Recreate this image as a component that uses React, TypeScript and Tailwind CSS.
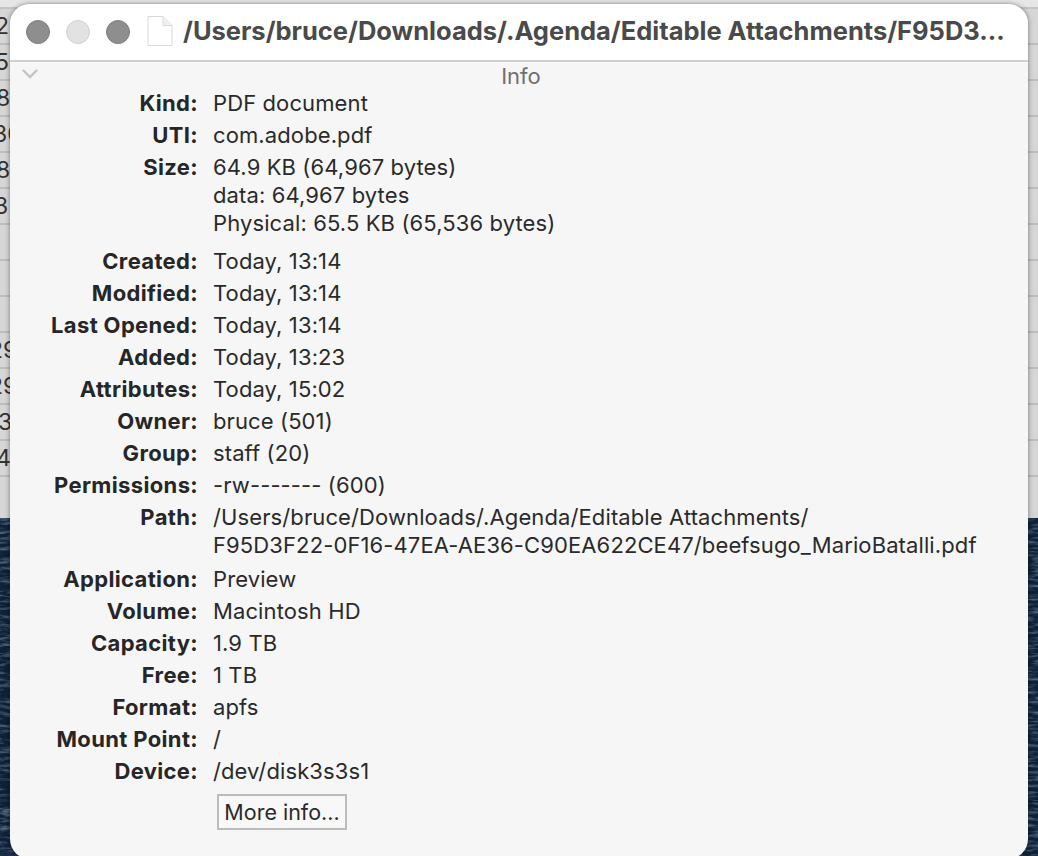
const rows: [string, string[]][] = [
  ["Kind:", ["PDF document"]],
  ["UTI:", ["com.adobe.pdf"]],
  ["Size:", ["64.9 KB (64,967 bytes)", "data: 64,967 bytes", "Physical: 65.5 KB (65,536 bytes)"]],
];

const rows2: [string, string[]][] = [
  ["Created:", ["Today, 13:14"]],
  ["Modified:", ["Today, 13:14"]],
  ["Last Opened:", ["Today, 13:14"]],
  ["Added:", ["Today, 13:23"]],
  ["Attributes:", ["Today, 15:02"]],
  ["Owner:", ["bruce (501)"]],
  ["Group:", ["staff (20)"]],
  ["Permissions:", ["-rw------- (600)"]],
  [
    "Path:",
    [
      "/Users/bruce/Downloads/.Agenda/Editable Attachments/",
      "F95D3F22-0F16-47EA-AE36-C90EA622CE47/beefsugo_MarioBatalli.pdf",
    ],
  ],
  ["Application:", ["Preview"]],
  ["Volume:", ["Macintosh HD"]],
  ["Capacity:", ["1.9 TB"]],
  ["Free:", ["1 TB"]],
  ["Format:", ["apfs"]],
  ["Mount Point:", ["/"]],
  ["Device:", ["/dev/disk3s3s1"]],
];

// rows of the spreadsheet showing behind the window, clipped by its left edge
const sheetRows: [string, string][] = [
  ["2", "ml-[-5px]"],
  ["5", "ml-[-5px]"],
  ["8", "ml-[-4px]"],
  ["30", "ml-[-7px]"],
  ["8", "ml-[-4px]"],
  ["3", "ml-[-6px]"],
  ["", ""],
  ["", ""],
  ["", ""],
  ["29", "ml-[-11px]"],
  ["29", "ml-[-11px]"],
  ["3", "ml-[-2px]"],
  ["4", "ml-[-4px]"],
];

function InfoRow({ label, values }: { label: string; values: string[] }) {
  return (
    <div className={values.length > 1 ? "mb-[2px] flex" : "flex"}>
      <div className="w-[188px] shrink-0 text-right font-bold leading-[28px] tracking-[0.35px] text-[#262626]">{label}</div>
      <div className="ml-[15px] flex flex-col">
        {values.map((v) => (
          <div key={v} className="whitespace-nowrap leading-[28px] tracking-[0.11px] text-[#2a2a2a]">
            {v}
          </div>
        ))}
      </div>
    </div>
  );
}

export default function App() {
  return (
    <div className="relative flex h-[856px] w-[1038px] flex-col overflow-hidden bg-[#12263f] font-['Inter',sans-serif]">
      <div className="flex h-[518px] shrink-0 flex-col overflow-hidden bg-[#d6d6d6]">
        <div className="h-[9px] shrink-0 border-b-2 border-[#c4c4c4] bg-[#e6e6e6]" />
        {sheetRows.map(([d, offset], i) => (
          <div key={i} className="h-[36px] shrink-0 border-b-2 border-[#bdbdbd] text-[23px] leading-[34px] text-[#333]">
            <div className={offset}>{d}</div>
          </div>
        ))}
      </div>

      <svg className="h-[338px] w-full shrink-0" aria-hidden="true">
        <filter id="water" x="0" y="0" width="100%" height="100%">
          <feTurbulence type="fractalNoise" baseFrequency="0.06 0.3" numOctaves="3" seed="11" />
          <feColorMatrix
            type="matrix"
            values="0 0 0 0 0.17  0 0 0 0 0.25  0 0 0 0 0.34  1.7 0 0 0 -0.72"
          />
        </filter>
        <rect width="100%" height="100%" fill="#0e2138" />
        <rect width="100%" height="100%" filter="url(#water)" />
      </svg>

      <div className="absolute left-[10px] top-[4px] flex h-[855px] w-[1018px] flex-col overflow-hidden rounded-[20px] bg-[#f6f6f6] shadow-[0_0_5px_rgba(0,0,0,0.45)]">
        <div className="flex h-[58px] shrink-0 items-center border-b-2 border-[#d0d0d0] bg-white pl-[16px]">
          <span className="h-6 w-6 rounded-full border border-[#7e7e7e] bg-[#8e8e8e]" />
          <span className="ml-[16px] h-6 w-6 rounded-full border border-[#d0d0d0] bg-[#e2e2e2]" />
          <span className="ml-[16px] h-6 w-6 rounded-full border border-[#7e7e7e] bg-[#8e8e8e]" />
          <svg className="mb-[2px] ml-[17px]" width="26" height="32" viewBox="0 0 26 32" fill="none">
            <path d="M1 1.5h15l9 9v20H1z" fill="#fff" stroke="#d8d8d8" strokeWidth="1" />
            <path d="M16 1.5v9h9" fill="#f0f0f0" stroke="#d8d8d8" strokeWidth="1" />
          </svg>
          <div className="mb-[2px] ml-[10px] whitespace-nowrap text-[25.5px] font-bold tracking-[-0.01px] text-[#4a4a4a]">
            /Users/bruce/Downloads/.Agenda/Editable Attachments/F95D3...
          </div>
        </div>

        <div className="relative flex h-[27px] shrink-0 items-center justify-center pl-[4px] pt-[1px] text-[22px] text-[#6f6f6f]">
          <svg className="absolute left-[11px] top-[6px]" width="18" height="12" viewBox="0 0 18 12" fill="none">
            <path d="M2.5 2.5L9 9l6.5-6.5" stroke="#c4c4c4" strokeWidth="2.4" strokeLinecap="round" />
          </svg>
          Info
        </div>

        <div className="flex flex-col text-[22px] [&>*+*]:mt-[4px]">
          {rows.map(([label, values]) => (
            <InfoRow key={label} label={label} values={values} />
          ))}
        </div>
        <div className="mt-[8px] flex flex-col text-[22px] [&>*+*]:mt-[4px]">
          {rows2.map(([label, values]) => (
            <InfoRow key={label} label={label} values={values} />
          ))}
        </div>

        <button className="ml-[207px] mt-[9px] h-[36px] w-[130px] shrink-0 border-2 border-[#bcbcbc] bg-[#f8f8f8] text-center text-[21.5px] leading-[30px] text-[#2a2a2a]">
          More info...
        </button>
      </div>
    </div>
  );
}
